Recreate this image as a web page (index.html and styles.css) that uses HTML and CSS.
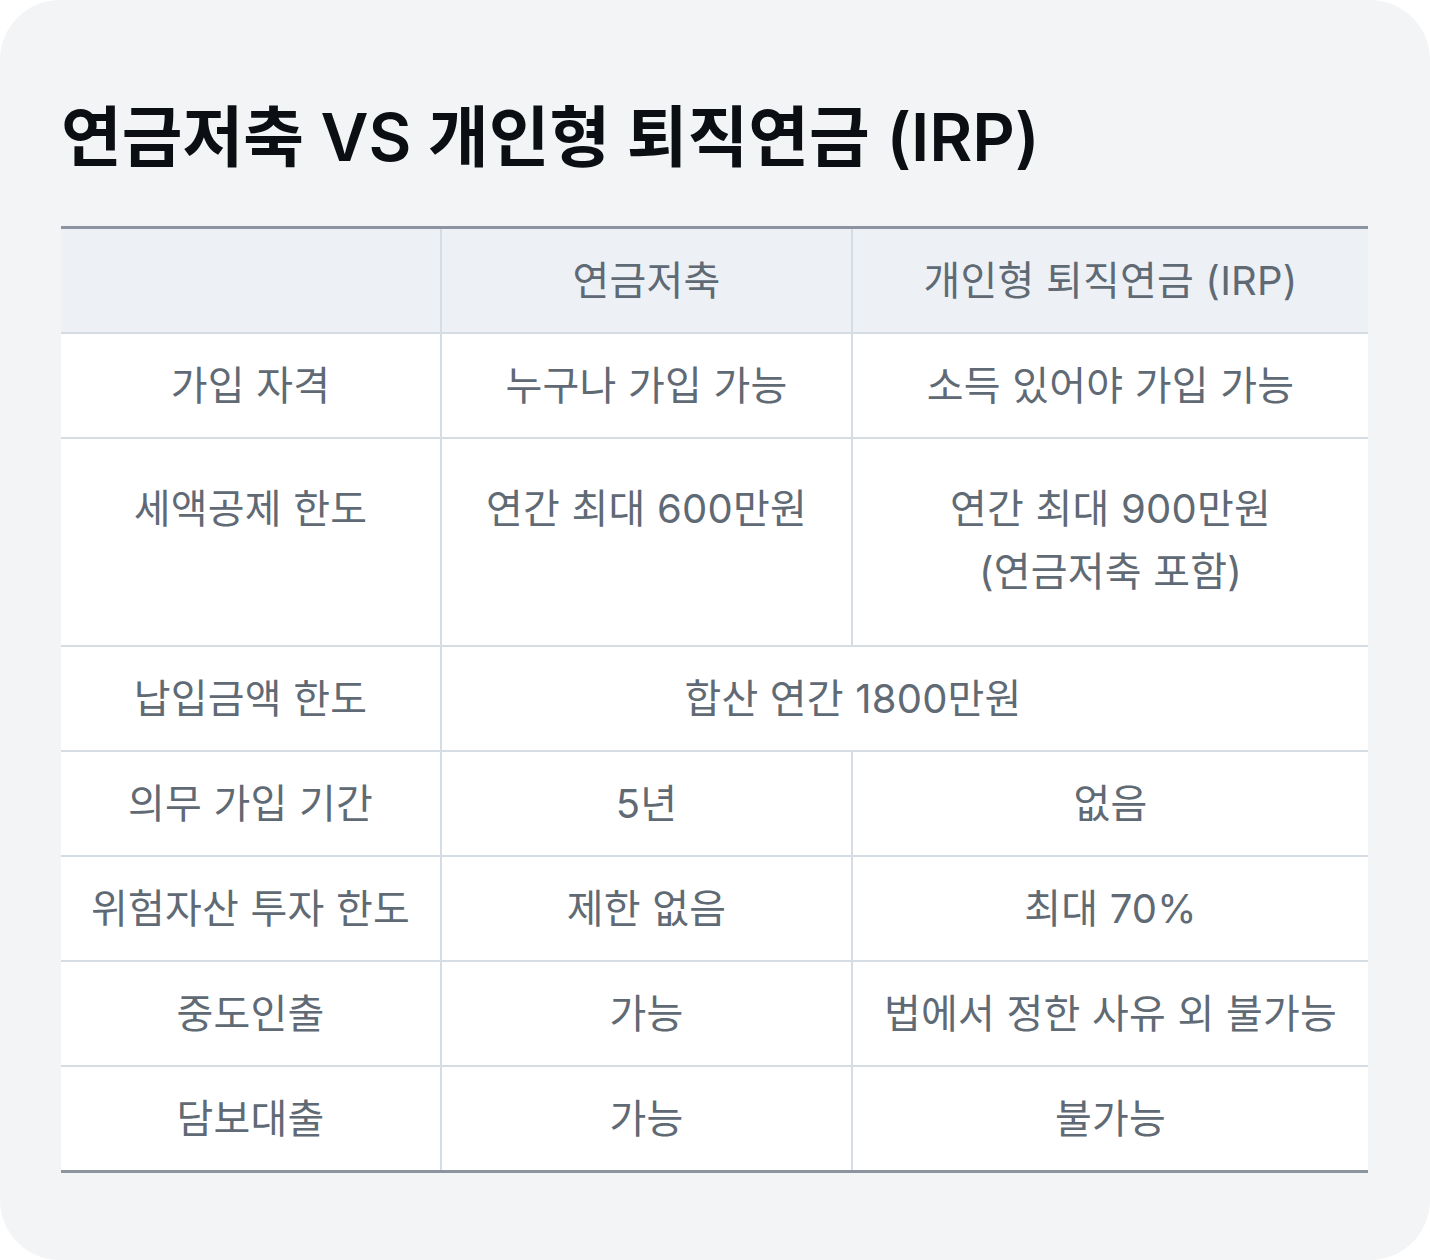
FILE: index.html
```html
<!DOCTYPE html>
<html lang="ko">
<head>
<meta charset="utf-8">
<link rel="stylesheet" href="styles.css">
</head>
<body>
<div class="card">
  <h1 class="title">연금저축 VS 개인형 퇴직연금 (IRP)</h1>
  <table class="cmp">
    <colgroup>
      <col class="c1"><col class="c2"><col class="c3">
    </colgroup>
    <thead>
      <tr class="head">
        <th></th>
        <th>연금저축</th>
        <th>개인형 퇴직연금 (IRP)</th>
      </tr>
    </thead>
    <tbody>
      <tr><td>가입 자격</td><td>누구나 가입 가능</td><td>소득 있어야 가입 가능</td></tr>
      <tr class="tall"><td>세액공제 한도</td><td>연간 최대 600만원</td><td>연간 최대 900만원<br>(연금저축 포함)</td></tr>
      <tr><td>납입금액 한도</td><td colspan="2" class="merged">합산 연간 1800만원</td></tr>
      <tr><td>의무 가입 기간</td><td>5년</td><td>없음</td></tr>
      <tr><td>위험자산 투자 한도</td><td>제한 없음</td><td>최대 70%</td></tr>
      <tr><td>중도인출</td><td>가능</td><td>법에서 정한 사유 외 불가능</td></tr>
      <tr><td>담보대출</td><td>가능</td><td>불가능</td></tr>
    </tbody>
  </table>
</div>
</body>
</html>
```
FILE: styles.css
```css
html, body {
  margin: 0;
  padding: 0;
  background: #ffffff;
}
body {
  font-family: "Inter", "Noto Sans CJK KR", sans-serif;
}
.card {
  width: 1430px;
  height: 1260px;
  box-sizing: border-box;
  background: #f3f4f6;
  border-radius: 60px;
  padding: 98px 62px 0 61px;
}
.title {
  margin: 0 0 50px 0;
  font-size: 66px;
  line-height: 78px;
  font-weight: 600;
  color: #0b0f14;
  letter-spacing: 0;
}
.cmp {
  width: 1307px;
  border-collapse: collapse;
  table-layout: fixed;
  background: #ffffff;
  border-top: 3px solid #8c959f;
  border-bottom: 3px solid #8c959f;
  font-size: 40px;
  line-height: 63px;
  color: #5f6a75;
  letter-spacing: 0.2px;
}
.c1 { width: 380px; }
.c2 { width: 411px; }
.c3 { width: 516px; }
.cmp th, .cmp td {
  padding: 0;
  height: 103px;
  text-align: center;
  vertical-align: middle;
  font-weight: 400;
  border: 2px solid #d6dce3;
}
.cmp tr > :first-child { border-left: none; }
.cmp tr > :last-child { border-right: none; }
.cmp thead tr:first-child th { border-top: none; }
.cmp tbody tr:last-child td { border-bottom: none; }
.head th {
  background: #edf1f5;
}
.tall td {
  height: 208px;
  vertical-align: top;
  padding-top: 38px;
  box-sizing: border-box;
}
.cmp td.merged {
  padding-right: 104px;
}
```
